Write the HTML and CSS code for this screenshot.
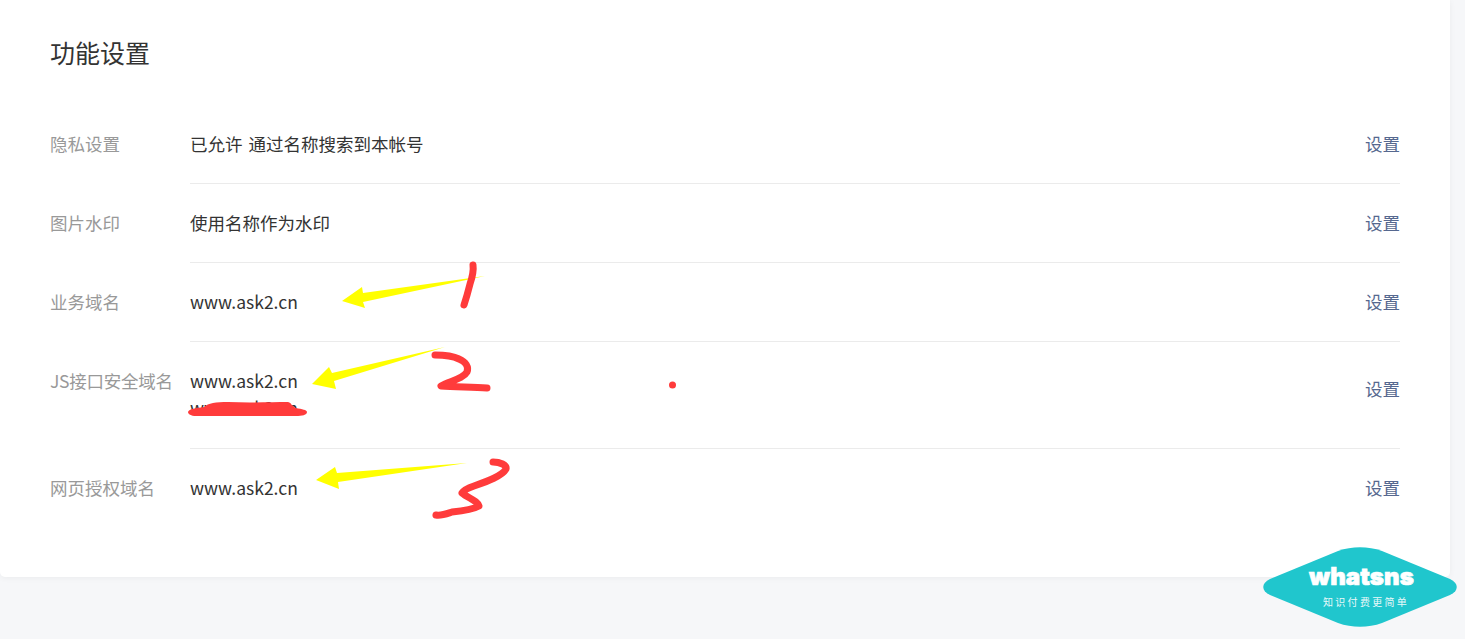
FILE: index.html
```html
<!DOCTYPE html>
<html lang="zh-CN">
<head>
<meta charset="utf-8">
<title>功能设置</title>
<link rel="stylesheet" href="styles.css">
</head>
<body>
<main class="card">
  <h1 class="title">功能设置</h1>
  <div class="list">
    <div class="row">
      <div class="label">隐私设置</div>
      <div class="rowbody">
        <div class="value">已允许 通过名称搜索到本帐号</div>
        <a class="action">设置</a>
      </div>
    </div>
    <div class="row">
      <div class="label">图片水印</div>
      <div class="rowbody">
        <div class="value">使用名称作为水印</div>
        <a class="action">设置</a>
      </div>
    </div>
    <div class="row">
      <div class="label">业务域名</div>
      <div class="rowbody">
        <div class="value">www.ask2.cn</div>
        <a class="action">设置</a>
      </div>
    </div>
    <div class="row">
      <div class="label label-tight">JS接口安全域名</div>
      <div class="rowbody">
        <div class="value">www.ask2.cn<div class="value-sub">www.ask2.cn</div></div>
        <a class="action action-raised">设置</a>
      </div>
    </div>
    <div class="row">
      <div class="label">网页授权域名</div>
      <div class="rowbody">
        <div class="value">www.ask2.cn</div>
        <a class="action">设置</a>
      </div>
    </div>
  </div>
</main>

<svg class="marks" width="1465" height="639" viewBox="0 0 1465 639" aria-hidden="true">
  <g class="yellow">
    <path d="M342 301L362 287L363 293L485 276L363 302L365 308Z"/>
    <path d="M312 384L329 367L332 373L445 347L334 381L336 389Z"/>
    <path d="M316 480L335 467L337 473L467 463L338 482L339 489Z"/>
  </g>
  <g class="red">
    <path d="M473 265C474 272 472 278 470 284C468 292 466 299 464 305"/>
    <path d="M435 355C445 355 453 356 459 359C466 362 469 367 467 372C463 379 450 381 441 386C455 387 472 387 487 388"/>
    <path class="blob" d="M188 412C189 409 196 408 204 407C208 403 216 402 228 402C250 403 272 402 288 402C292 403 291 406 296 408C302 409 307 410 307 412C307 415 302 416 296 416C262 416 222 416 196 416C191 416 188 414 188 412Z"/>
    <path d="M493 462C500 462 507 465 506 469C502 476 488 481 474 486C468 488 464 490 462 493C468 498 478 501 479 506C472 510 462 511 452 512C446 514 441 516 436 515"/>
    <circle class="dot" cx="672.5" cy="385" r="3.5"/>
  </g>
</svg>

<aside class="badge">
  <svg class="badge-shape" width="194" height="80" viewBox="0 0 194 80" aria-hidden="true">
    <path d="M7 32L75 4C89 -1 105 -1 119 4L187 32C196 36 196 44 187 48L119 76C105 81 89 81 75 76L7 48C-2 44 -2 36 7 32Z"/>
  </svg>
  <div class="badge-name">whatsns</div>
  <div class="badge-slogan">知识付费更简单</div>
</aside>
</body>
</html>
```
FILE: styles.css
```css
* {
  box-sizing: border-box;
}

html,
body {
  margin: 0;
  height: 639px;
  overflow: hidden;
}

body {
  position: relative;
  background: #f6f7f9;
  font-family: "Noto Sans CJK SC", "Noto Sans", sans-serif;
  color: #333;
}

.card {
  width: 1450px;
  height: 577px;
  padding: 0 50px;
  background: #fff;
  border-bottom-right-radius: 5px;
  border-bottom-left-radius: 5px;
  box-shadow: 0 1px 6px rgba(0, 0, 0, 0.05);
}

.title {
  margin: 0;
  padding-top: 34px;
  height: 105px;
  font-size: 25px;
  line-height: 36px;
  font-weight: 400;
  color: #333;
}

.row {
  display: flex;
  font-size: 17.5px;
  line-height: 27px;
}

.label {
  flex: 0 0 140px;
  padding-top: 25px;
  color: #999;
  white-space: nowrap;
}

.label-tight {
  letter-spacing: -0.25px;
}

.rowbody {
  flex: 1;
  display: flex;
  justify-content: space-between;
  padding: 25px 0 26px;
  border-bottom: 1px solid #ebebeb;
}

.row:last-child .rowbody {
  border-bottom: 0;
}

.value {
  color: #333;
  word-spacing: 2px;
}

.value-sub {
  line-height: 28px;
}

.action {
  color: #56688f;
}

.action-raised {
  margin-top: 8px;
}

.marks {
  position: absolute;
  left: 0;
  top: 0;
}

.yellow path {
  fill: #ffff00;
}

.red path {
  fill: none;
  stroke: #ff3b3b;
  stroke-width: 7;
  stroke-linecap: round;
  stroke-linejoin: round;
}

.red .blob {
  fill: #ff3b3b;
  stroke: none;
}

.red .dot {
  fill: #ff3b3b;
}

.badge {
  position: absolute;
  left: 1263px;
  top: 547px;
  width: 194px;
  height: 80px;
  color: #fff;
}

.badge-shape {
  display: block;
}

.badge-shape path {
  fill: #20c6cd;
}

.badge-name {
  position: absolute;
  left: 46px;
  top: 16px;
  font-family: "Inter", sans-serif;
  font-size: 24px;
  line-height: 28px;
  font-weight: 900;
  letter-spacing: 0.1px;
  -webkit-text-stroke: 0.7px #fff;
}

.badge-slogan {
  position: absolute;
  left: 60px;
  top: 48px;
  font-size: 10px;
  line-height: 14px;
  letter-spacing: 2.3px;
  white-space: nowrap;
  opacity: 0.9;
}
```
